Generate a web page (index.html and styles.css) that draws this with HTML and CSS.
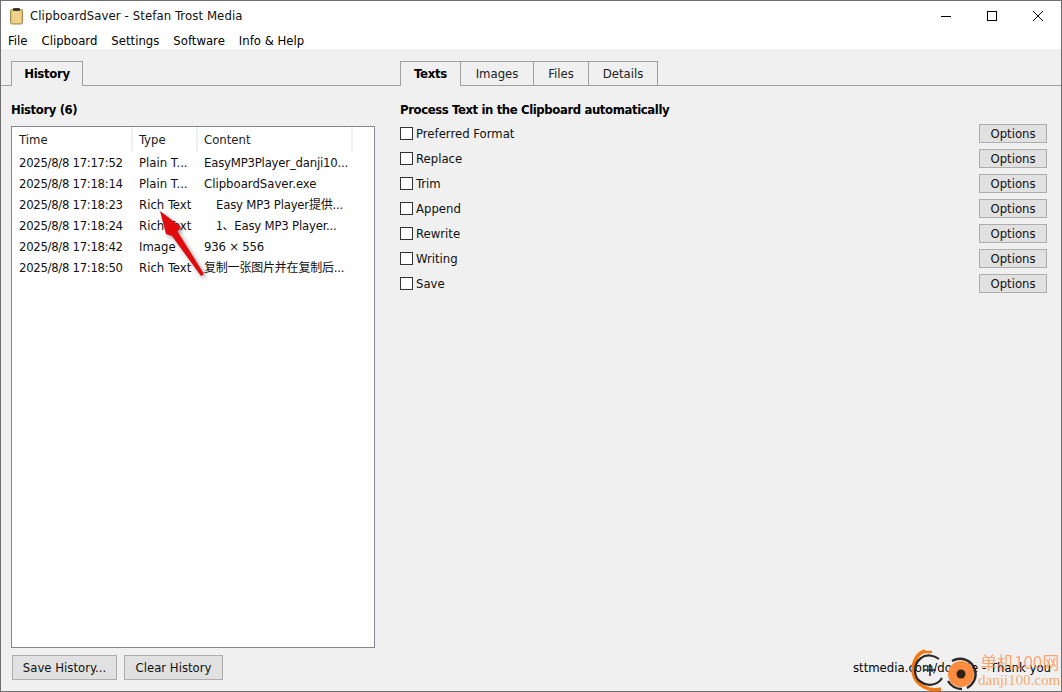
FILE: index.html
```html
<!DOCTYPE html>
<html>
    <head>
        <title>ClipboardSaver - Stefan Trost Media</title>
        <link rel="stylesheet" href="styles.css">
    </head>
    <body>
        <div class="window">
            <div class="titlebar">
                <svg class="appIcon" width="16" height="18" viewBox="0 0 16 18">
                    <rect x="1.5" y="2.5" width="12" height="14.5" rx="1.5" fill="#e3bf6c" stroke="#a58a52"/>
                    <rect x="3" y="4" width="9" height="12" fill="#efd288"/>
                    <rect x="4" y="1" width="7" height="3" rx="1" fill="#3a3a34"/>
                </svg>
                <div class="appTitle">ClipboardSaver - Stefan Trost Media</div>
                <div class="winBtn">
                    <svg width="12" height="12" viewBox="0 0 12 12"><path d="M1 6.5H11" stroke="#000" fill="none"/></svg>
                </div>
                <div class="winBtn">
                    <svg width="12" height="12" viewBox="0 0 12 12"><rect x="1.5" y="1.5" width="9" height="9" stroke="#000" fill="none"/></svg>
                </div>
                <div class="winBtn">
                    <svg width="12" height="12" viewBox="0 0 12 12"><path d="M1 1L11 11M11 1L1 11" stroke="#000" fill="none"/></svg>
                </div>
            </div>
            <div class="menubar">
                <span class="menuItem">File</span>
                <span class="menuItem">Clipboard</span>
                <span class="menuItem">Settings</span>
                <span class="menuItem">Software</span>
                <span class="menuItem">Info &amp; Help</span>
            </div>
            <div class="main">
                <div class="leftPane">
                    <div class="tabs">
                        <div class="tab active">History</div>
                    </div>
                    <div class="heading">History (6)</div>
                    <div class="list">
                        <div class="listHead">
                            <div class="col colTime">Time</div>
                            <div class="col colType">Type</div>
                            <div class="col colContent">Content</div>
                        </div>
                        <div class="listRow"><div class="colTime">2025/8/8 17:17:52</div><div class="colType">Plain T...</div><div class="colContent tight">EasyMP3Player_danji10...</div></div>
                        <div class="listRow"><div class="colTime">2025/8/8 17:18:14</div><div class="colType">Plain T...</div><div class="colContent">ClipboardSaver.exe</div></div>
                        <div class="listRow"><div class="colTime">2025/8/8 17:18:23</div><div class="colType">Rich Text</div><div class="colContent indent tight">Easy MP3 Player<span class="cjk">提供</span>...</div></div>
                        <div class="listRow"><div class="colTime">2025/8/8 17:18:24</div><div class="colType">Rich Text</div><div class="colContent indent tight"><span class="cjk">1、</span>Easy MP3 Player...</div></div>
                        <div class="listRow"><div class="colTime">2025/8/8 17:18:42</div><div class="colType">Image</div><div class="colContent tight">936 × 556</div></div>
                        <div class="listRow"><div class="colTime">2025/8/8 17:18:50</div><div class="colType">Rich Text</div><div class="colContent tight"><span class="cjk">复制一张图片并在复制后</span>...</div></div>
                    </div>
                    <div class="leftButtons">
                        <div class="btn btnSave">Save History...</div>
                        <div class="btn btnClear">Clear History</div>
                    </div>
                </div>
                <div class="rightPane">
                    <div class="tabs">
                        <div class="tab active tabTexts">Texts</div>
                        <div class="tab tabImages">Images</div>
                        <div class="tab tabFiles">Files</div>
                        <div class="tab tabDetails">Details</div>
                    </div>
                    <div class="heading">Process Text in the Clipboard automatically</div>
                    <div class="options">
                        <div class="optRow"><span class="check"></span><span class="optName">Preferred Format</span><div class="btn btnOpt">Options</div></div>
                        <div class="optRow"><span class="check"></span><span class="optName">Replace</span><div class="btn btnOpt">Options</div></div>
                        <div class="optRow"><span class="check"></span><span class="optName">Trim</span><div class="btn btnOpt">Options</div></div>
                        <div class="optRow"><span class="check"></span><span class="optName">Append</span><div class="btn btnOpt">Options</div></div>
                        <div class="optRow"><span class="check"></span><span class="optName">Rewrite</span><div class="btn btnOpt">Options</div></div>
                        <div class="optRow"><span class="check"></span><span class="optName">Writing</span><div class="btn btnOpt">Options</div></div>
                        <div class="optRow"><span class="check"></span><span class="optName">Save</span><div class="btn btnOpt">Options</div></div>
                    </div>
                    <div class="footer">sttmedia.com/donate - Thank you</div>
                </div>
            </div>
        </div>

        <svg class="arrow" width="60" height="80" viewBox="0 0 60 80">
            <path d="M10 6L31 22L27.5 26.5L54 69L51 71L22 31L16 29Z" fill="#e00a0f"/>
        </svg>

        <div class="watermark">
            <svg class="wmLogo" width="76" height="47" viewBox="0 0 76 47">
                <path d="M20 6C10 9 6 21 9 31C12 40 24 47 36 44" stroke="#f57710" stroke-width="3.4" fill="none"/>
                <path d="M17 7L27 7" stroke="#f57710" stroke-width="2.5" fill="none"/>
                <path d="M34 14C29 10 21 9 16 13C8 19 8 32 16 37C23 42 33 40 37 33" stroke="#2c2624" stroke-width="2.2" fill="none"/>
                <path d="M25 19V31M19 25H31" stroke="#2c2624" stroke-width="1.6" fill="none"/>
                <circle cx="56" cy="29" r="13" fill="#fc8c3f"/>
                <circle cx="56" cy="29" r="4.5" fill="#2c2218"/>
                <path d="M47 16C56 11 67 15 70 25C72 32 69 39 62 43" stroke="#2c2624" stroke-width="2.4" fill="none"/>
                <path d="M43 36C46 41 51 44 57 44" stroke="#2c2624" stroke-width="2.4" fill="none"/>
            </svg>
            <div class="wmText">
                <div class="wmCn">单机100网</div>
                <div class="wmUrl">danji100.com</div>
            </div>
        </div>
    </body>
</html>
```

FILE: styles.css
```css
html,body{
    margin:0;
    padding:0;
    width:1062px;
    height:692px;
    overflow:hidden;
    font-family:"DejaVu Sans Condensed","Noto Sans CJK SC",sans-serif;
    font-size:13px;
    color:#000000;
}
body{
    position:relative;
}
.window{
    box-sizing:border-box;
    width:1062px;
    height:692px;
    border:1px solid #707070;
    display:flex;
    flex-direction:column;
    background:#f0f0f0;
}
.titlebar{
    height:29px;
    background:#ffffff;
    display:flex;
    align-items:center;
    flex:none;
}
.appIcon{
    margin-left:8px;
    margin-right:5px;
    flex:none;
}
.appTitle{
    flex:1;
    color:#111111;
    letter-spacing:0.1px;
}
.winBtn{
    width:46px;
    height:29px;
    display:flex;
    align-items:center;
    justify-content:center;
}
.menubar{
    height:19px;
    background:#ffffff;
    display:flex;
    flex:none;
    line-height:21px;
}
.menuItem{
    padding:0 7px;
}
.main{
    flex:1;
    display:flex;
    min-height:0;
}
.leftPane{
    width:399px;
    flex:none;
    display:flex;
    flex-direction:column;
}
.rightPane{
    flex:1;
    display:flex;
    flex-direction:column;
    min-width:0;
}
.tabs{
    margin-top:12px;
    height:24px;
    border-bottom:1px solid #a0a0a0;
    display:flex;
    flex:none;
}
.leftPane .tabs{
    padding-left:10px;
}
.tab{
    box-sizing:border-box;
    height:25px;
    border:1px solid #a0a0a0;
    border-left-width:0;
    background:#f0f0f0;
    text-align:center;
    line-height:23px;
    color:#222222;
}
.tab:first-child{
    border-left-width:1px;
}
.tab.active{
    font-weight:bold;
    color:#000000;
    border-bottom:none;
    width:72px;
    letter-spacing:-0.3px;
}
.tab.tabTexts{
    width:61px;
}
.tabImages{
    width:73px;
}
.tabFiles{
    width:55px;
}
.tabDetails{
    width:69px;
}
.heading{
    font-weight:bold;
    height:18px;
    line-height:18px;
    margin-top:15px;
    letter-spacing:-0.4px;
}
.leftPane .heading{
    padding-left:10px;
}
.list{
    box-sizing:border-box;
    margin:7px 0 0 10px;
    width:364px;
    height:522px;
    border:1px solid #828790;
    background:#ffffff;
    flex:none;
}
.listHead{
    display:flex;
    height:25px;
    line-height:25px;
    color:#222222;
}
.col{
    border-right:2px solid #f0f0f0;
    box-sizing:border-box;
}
.listHead .colTime{
    width:121px;
}
.listHead .colType{
    width:65px;
}
.listHead .colContent{
    width:155px;
}
.listRow{
    display:flex;
    height:21px;
    line-height:21px;
    white-space:nowrap;
    color:#111111;
}
.colTime{
    padding-left:7px;
}
.colType,.colContent{
    padding-left:6px;
}
.listRow .colTime,.listRow .colType{
    box-sizing:border-box;
}
.listRow .colTime{
    width:121px;
    letter-spacing:-0.3px;
}
.listRow .colType{
    width:65px;
}
.colContent.tight{
    letter-spacing:-0.2px;
}
.colContent.indent{
    padding-left:18px;
}
.cjk{
    font-family:"Noto Sans CJK SC",sans-serif;
    font-size:12px;
    line-height:0;
}
.leftButtons{
    display:flex;
    gap:7px;
    margin:7px 0 0 11px;
}
.btn{
    box-sizing:border-box;
    background:#e1e1e1;
    border:1px solid #adadad;
    text-align:center;
    color:#111111;
    white-space:nowrap;
}
.btnSave,.btnClear{
    height:25px;
    line-height:23px;
}
.btnSave{
    width:105px;
}
.btnClear{
    width:99px;
}
.options{
    margin-top:2px;
}
.optRow{
    height:25px;
    display:flex;
    align-items:center;
    padding-right:14px;
}
.check{
    box-sizing:border-box;
    width:13px;
    height:13px;
    border:1px solid #333333;
    background:#ffffff;
    flex:none;
}
.optName{
    margin-left:3px;
    flex:1;
    color:#111111;
}
.btnOpt{
    width:68px;
    height:19px;
    line-height:17px;
}
.footer{
    margin-top:auto;
    margin-bottom:16px;
    text-align:right;
    padding-right:10px;
    color:#000000;
}
.arrow{
    position:absolute;
    left:150px;
    top:205px;
    pointer-events:none;
    filter:drop-shadow(2px 2px 2px rgba(0,0,0,0.4));
}
.watermark{
    position:absolute;
    left:905px;
    top:645px;
    width:157px;
    height:47px;
    display:flex;
}
.wmLogo{
    flex:none;
}
.wmText{
    margin-left:-3px;
    color:#fb9a5a;
    white-space:nowrap;
    opacity:0.85;
}
.wmCn{
    font-family:"Noto Sans CJK SC",sans-serif;
    font-size:17px;
    line-height:21px;
    margin:6px 0 0 2px;
}
.wmUrl{
    font-family:"Liberation Serif",serif;
    font-size:15px;
    line-height:17px;
}
```
